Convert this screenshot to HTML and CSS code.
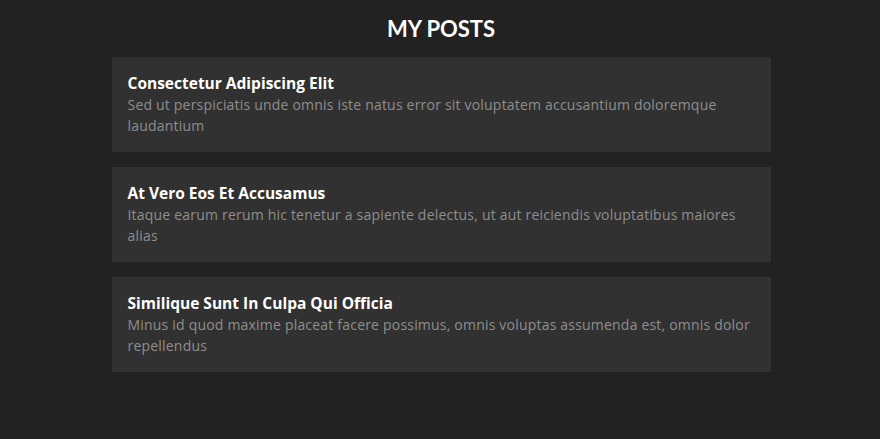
FILE: index.html
```html
<!DOCTYPE html>
<html>
<head>
<meta charset="utf-8">
<link rel="stylesheet" href="styles.css">
</head>
<body>
<main class="page">
  <h1 class="title">MY POSTS</h1>
  <ul class="posts">
    <li class="post">
      <h2 class="post-title">Consectetur Adipiscing Elit</h2>
      <p class="post-body">Sed ut perspiciatis unde omnis iste natus error sit voluptatem accusantium doloremque laudantium</p>
    </li>
    <li class="post">
      <h2 class="post-title">At Vero Eos Et Accusamus</h2>
      <p class="post-body">Itaque earum rerum hic tenetur a sapiente delectus, ut aut reiciendis voluptatibus maiores alias</p>
    </li>
    <li class="post">
      <h2 class="post-title">Similique Sunt In Culpa Qui Officia</h2>
      <p class="post-body">Minus id quod maxime placeat facere possimus, omnis voluptas assumenda est, omnis dolor repellendus</p>
    </li>
  </ul>
</main>
</body>
</html>
```
FILE: styles.css
```css
html, body {
  margin: 0;
  padding: 0;
  background: #222222;
  height: 100%;
}
body {
  font-family: "Open Sans", "Lato", sans-serif;
  color: #ffffff;
}
.page {
  width: 659px;
  margin: 0 auto;
  padding: 13px 0 0 2px;
  display: flex;
  flex-direction: column;
}
.title {
  margin: 0 0 13px;
  text-align: center;
  font-family: "Lato", sans-serif;
  font-size: 22px;
  font-weight: 700;
  line-height: 31px;
  color: #ffffff;
}
.posts {
  list-style: none;
  margin: 0;
  padding: 0;
  display: flex;
  flex-direction: column;
  gap: 15px;
}
.post {
  background: #313131;
  padding: 15px 16px 16px;
}
.post-title {
  margin: 0;
  font-size: 15.5px;
  font-weight: 700;
  line-height: 22px;
  color: #ffffff;
}
.post-body {
  margin: 0;
  font-size: 14px;
  letter-spacing: 0.2px;
  line-height: 21px;
  color: #8e8e8e;
}
```
